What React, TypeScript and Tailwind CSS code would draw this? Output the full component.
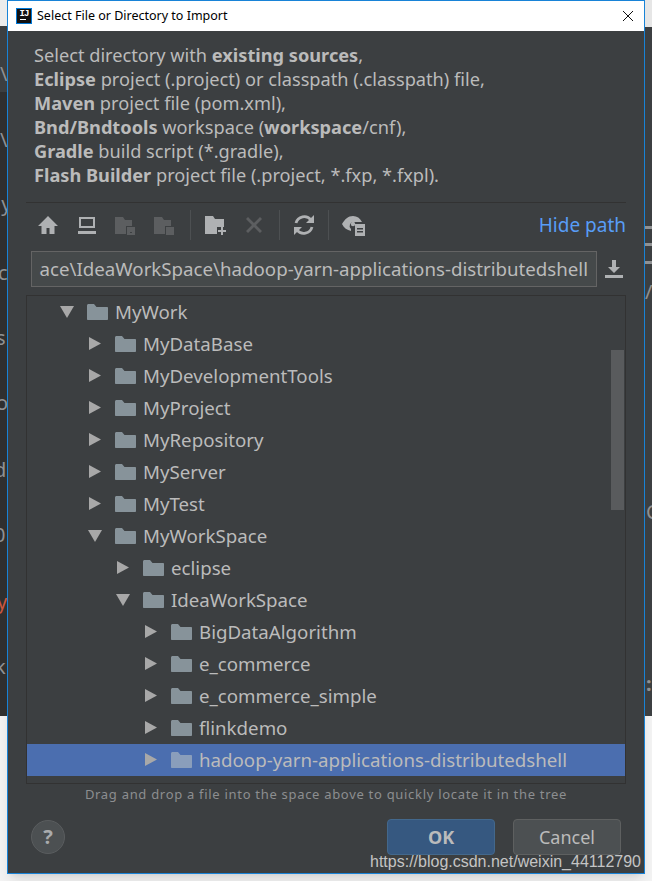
import { ReactNode } from 'react';

type Node = { name: string; level: number; open?: boolean; selected?: boolean };

const nodes: Node[] = [
  { name: 'MyWork', level: 0, open: true },
  { name: 'MyDataBase', level: 1 },
  { name: 'MyDevelopmentTools', level: 1 },
  { name: 'MyProject', level: 1 },
  { name: 'MyRepository', level: 1 },
  { name: 'MyServer', level: 1 },
  { name: 'MyTest', level: 1 },
  { name: 'MyWorkSpace', level: 1, open: true },
  { name: 'eclipse', level: 2 },
  { name: 'IdeaWorkSpace', level: 2, open: true },
  { name: 'BigDataAlgorithm', level: 3 },
  { name: 'e_commerce', level: 3 },
  { name: 'e_commerce_simple', level: 3 },
  { name: 'flinkdemo', level: 3 },
  { name: 'hadoop-yarn-applications-distributedshell', level: 3, selected: true },
];

const folderPath = 'M0 1.500C0 .7.7 0 1.500 0H7l2.500 3H20c.6 0 1 .4 1 1v11c0 .6-.4 1-1 1H1c-.6 0-1-.4-1-1z';

const Folder = ({ selected }: { selected?: boolean }) => (
  <svg width="21" height="16" viewBox="0 0 21 16" className="shrink-0">
    <path d={folderPath} fill={selected ? '#8a9ebb' : '#87939a'} />
  </svg>
);

const Arrow = ({ open }: { open?: boolean }) => (
  <svg width="16" height="14" viewBox="0 0 16 14" className="shrink-0">
    {open ? <path d="M1 1h14L8 13z" fill="#a8a8a8" /> : <path d="M2 0l12 6.500L2 13z" fill="#a8a8a8" />}
  </svg>
);

const TreeRow = ({ node }: { node: Node }) => (
  <div
    className={`flex h-8 items-center ${node.selected ? 'bg-[#4b6eaf]' : ''}`}
    style={{ paddingLeft: 32 + node.level * 28 }}
  >
    <Arrow open={node.open} />
    <div className="ml-3 flex items-center gap-[7px]">
      <Folder selected={node.selected} />
      <span className="whitespace-nowrap">{node.name}</span>
    </div>
  </div>
);

const ToolIcon = ({ children, className }: { children: ReactNode; className: string }) => (
  <div className={`flex h-6 items-center justify-center ${className}`}>
    <svg width="24" height="24" viewBox="0 0 24 24">
      {children}
    </svg>
  </div>
);

const ToolSep = ({ className }: { className: string }) => <div className={`h-[30px] w-px bg-[#4d5052] ${className}`} />;

const Toolbar = () => (
  <div className="mb-1 flex h-[44px] items-center pl-[10px]">
    <ToolIcon className="w-6">
      <path d="M12 3L2 13h3.500v8h5v-6h3v6h5v-8H22z" fill="#afb1b3" />
    </ToolIcon>
    <ToolIcon className="ml-[15px] w-6">
      <path d="M4 4h16v11H4zM6 6v7h12V6zM3 18h18v3H3z" fill="#afb1b3" fillRule="evenodd" />
    </ToolIcon>
    <ToolIcon className="ml-[14px] w-6">
      <path d="M2 4h8l2 3h7v6h-6v8H2z" fill="#5c5e60" />
      <path d="M14 14h8v8h-8z" fill="#5c5e60" />
      <path d="M17 19h2v1h-2z" fill="#3c3f41" />
    </ToolIcon>
    <ToolIcon className="ml-[15px] w-6">
      <path d="M2 4h8l2 3h7v6h-6v8H2z" fill="#5c5e60" />
      <path d="M14 14h8v8h-8z" fill="#5c5e60" />
    </ToolIcon>
    <ToolSep className="ml-[14px]" />
    <ToolIcon className="ml-[12px] w-6">
      <path d="M2 3h8l2 3h9v8h-7v7H2z" fill="#afb1b3" />
      <path d="M18 14h2v3h3v2h-3v3h-2v-3h-3v-2h3z" fill="#afb1b3" />
    </ToolIcon>
    <ToolIcon className="ml-[15px] w-6">
      <path d="M6 4l6 6 6-6 2 2-6 6 6 6-2 2-6-6-6 6-2-2 6-6-6-6z" fill="#5c5e60" />
    </ToolIcon>
    <ToolSep className="ml-[13px]" />
    <ToolIcon className="ml-[12px] w-6">
      <path d="M4 10a8.500 8.500 0 0 1 15-3" fill="none" stroke="#afb1b3" strokeWidth="2.800" />
      <path d="M22 2v8h-8z" fill="#afb1b3" />
      <path d="M20 14a8.500 8.500 0 0 1-15 3" fill="none" stroke="#afb1b3" strokeWidth="2.800" />
      <path d="M2 22v-8h8z" fill="#afb1b3" />
    </ToolIcon>
    <ToolSep className="ml-[12px]" />
    <ToolIcon className="ml-[13px] w-6">
      <path d="M0 11c3-5 6-8 11-8 4 0 7 2 9 6h-8a4 4 0 0 0-3 7v2c-4-1-7-3-9-7z" fill="#afb1b3" />
      <circle cx="11" cy="11" r="2.200" fill="#afb1b3" />
      <path d="M13 11h10v12H13z" fill="#afb1b3" />
      <path d="M15 15h6v1.500h-6zM15 18h6v1.500h-6z" fill="#3c3f41" />
    </ToolIcon>
    <span className="ml-auto text-[19px] text-[#589df6]">Hide path</span>
  </div>
);

const LeftStrip = () => (
  <div className="relative h-[716px] w-[7px] shrink-0 overflow-hidden bg-[#2f2f2f] text-[20px] leading-6 text-[#8f9193]">
    <div className="h-[26px] bg-[#ececec]" />
    <div className="h-[66px] bg-[#3c3f41]" />
    <span className="absolute left-0 top-[62px]">\</span>
    <span className="absolute left-0 top-[128px]">\</span>
    <span className="absolute left-[-4px] top-[192px]">ly</span>
    <span className="absolute left-[-2px] top-[261px]">c</span>
    <span className="absolute left-[-4px] top-[326px]">s</span>
    <span className="absolute left-[-4px] top-[391px]">o</span>
    <span className="absolute left-[-6px] top-[458px]">d</span>
    <span className="absolute left-[-6px] top-[523px]">0</span>
    <span className="absolute left-[-3px] top-[590px] text-[#c9573f]">y</span>
    <span className="absolute left-[-5px] top-[655px]">k</span>
  </div>
);

const RightStrip = () => (
  <div className="relative h-[716px] w-[7px] shrink-0 overflow-hidden bg-[#3c3f41] text-[20px] leading-6 text-[#8f9193]">
    <div className="h-[27px] bg-[#e6e6e6]" />
    <div className="absolute left-0 top-[226px] h-[3px] w-full bg-[#909294]" />
    <div className="absolute left-0 top-[243px] h-[3px] w-full bg-[#909294]" />
    <div className="absolute left-0 top-[261px] h-[3px] w-full bg-[#909294]" />
    <span className="absolute left-0 top-[280px]">/i</span>
    <span className="absolute left-[1px] top-[500px]">C</span>
    <span className="absolute left-[1px] top-[672px] font-bold">:</span>
  </div>
);

export default function App() {
  return (
    <div className="relative h-[881px] w-[652px] overflow-hidden bg-[#f4f4f4] font-['Noto_Sans',sans-serif] text-[#bbbbbb]">
      <div className="flex items-start">
        <LeftStrip />
        <div className="h-[874px] w-[638px] shrink-0 border border-[#1883d7] bg-[#3c3f41] shadow-lg">
          {/* title bar */}
          <div className="flex h-[30px] items-center bg-white pl-2 pr-[7px] text-black">
            <div className="flex h-4 w-4 flex-col items-center border border-[#0078d7] bg-[#111111] text-white">
              <span className="font-['Liberation_Mono',monospace] text-[9px] font-bold leading-[10px] tracking-[-1px]">IJ</span>
              <div className="mr-[3px] h-px w-[6px] bg-white" />
            </div>
            <span className="ml-[5px] text-[12.5px]">Select File or Directory to Import</span>
            <svg width="12" height="12" viewBox="0 0 12 12" className="ml-auto mr-[3px]">
              <path d="M1 1l10 10M11 1L1 11" stroke="#111" strokeWidth="1" fill="none" />
            </svg>
          </div>

          {/* description */}
          <div className="pl-[26px] pt-[12px] text-[18.2px] leading-6">
            <p>
              Select directory with <b>existing sources</b>,
            </p>
            <p>
              <b>Eclipse</b> project (.project) or classpath (.classpath) file,
            </p>
            <p>
              <b>Maven</b> project file (pom.xml),
            </p>
            <p>
              <b>Bnd/Bndtools</b> workspace (<b>workspace</b>/cnf),
            </p>
            <p>
              <b>Gradle</b> build script (*.gradle),
            </p>
            <p>
              <b>Flash Builder</b> project file (.project, *.fxp, *.fxpl).
            </p>
          </div>

          <div className="mx-[18px] mt-[15px] border-t border-[#323232]">
            <Toolbar />
          </div>

          {/* path field */}
          <div className="ml-[23px] flex items-center">
            <div className="flex h-[36px] w-[566px] items-center justify-end border border-[#646464] bg-[#45494a] pl-[7px] pr-2">
              <div className="flex w-full justify-end overflow-hidden">
                <span className="shrink-0 whitespace-nowrap text-[18.7px]">
                  MyWorkSpace\IdeaWorkSpace\hadoop-yarn-applications-distributedshell
                </span>
              </div>
            </div>
            <svg width="18" height="18" viewBox="0 0 18 18" className="ml-2">
              <path d="M7 0h4v7h4l-6 6-6-6h4zM0 15h18v3H0z" fill="#afb1b3" />
            </svg>
          </div>

          {/* tree */}
          <div className="relative mx-[18px] mt-2 h-[489px] border border-[#323232] text-[18.7px]">
            {nodes.map((node) => (
              <TreeRow key={node.name} node={node} />
            ))}
            <div className="absolute right-[1px] top-[54px] h-[160px] w-[13px] bg-[#595b5d]" />
          </div>

          <p className="mt-[1px] text-center text-[13px] leading-[18px] tracking-[0.7px] text-[#8c8e90]">
            Drag and drop a file into the space above to quickly locate it in the tree
          </p>

          {/* footer */}
          <div className="mx-[23px] mt-[16px] flex items-center">
            <div className="flex h-[34px] w-[34px] items-center justify-center rounded-full border border-[#5a5d5f] bg-[#4c5052] text-[20px] font-bold text-[#a9abad]">
              ?
            </div>
            <button className="ml-auto h-[36px] w-[108px] rounded-[4px] border border-[#43688c] bg-[#365880] text-[18px] font-bold">
              OK
            </button>
            <button className="ml-[18px] h-[36px] w-[108px] rounded-[4px] border border-[#5e6060] bg-[#4c5052] text-[18px]">
              Cancel
            </button>
          </div>
        </div>
        <RightStrip />
      </div>
      <span className="absolute left-[370px] top-[851px] font-['Liberation_Sans',sans-serif] text-[16px] leading-[22px] text-[#c4c4c4]">
        https://blog.csdn.net/weixin_44112790
      </span>
    </div>
  );
}
